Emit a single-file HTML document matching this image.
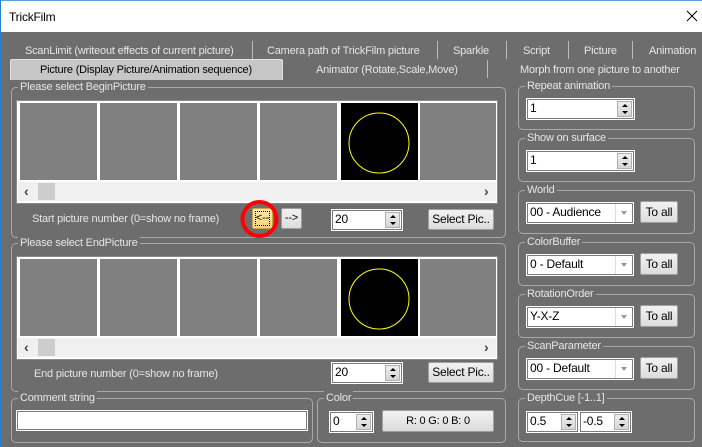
<!DOCTYPE html>
<html><head><meta charset="utf-8"><style>
*{box-sizing:border-box;margin:0;padding:0}
body{width:702px;height:447px;overflow:hidden;background:#6d6d6d;font-family:"Liberation Sans",sans-serif;font-size:11px;letter-spacing:-0.2px;color:#e6e6e6;position:relative}
.a{position:absolute}
.t{position:absolute;white-space:nowrap;line-height:14px}
.g{position:absolute;border:1px solid #a9a9a9;border-radius:5px}
.gl{position:absolute;top:-8px;left:6px;background:#6d6d6d;padding:0 2px;line-height:14px;white-space:nowrap;color:#e6e6e6}
.sep{position:absolute;width:1px;background:#bcbcbc}
.btn{position:absolute;background:linear-gradient(#f2f2f2,#dcdcdc);border:1px solid #a0a0a0;border-radius:2px;color:#000;text-align:center;line-height:18px}
.tb{position:absolute;background:#fff;border:1px solid #7a7a7a;outline:1px solid #fff;color:#000;line-height:17px;padding-left:2px;font-size:12px}
.sp{position:absolute;right:1px;top:1px;bottom:1px;width:15px;background:linear-gradient(#eee,#d6d6d6);border:1px solid #b0b0b0}
.sp:before{content:"";position:absolute;left:4px;top:2px;border:3px solid transparent;border-bottom:3px solid #000;border-top:0}
.sp:after{content:"";position:absolute;left:4px;bottom:2px;border:3px solid transparent;border-top:3px solid #000;border-bottom:0}
.dd{position:absolute;right:0;top:0;bottom:0;width:17px;border-left:1px solid #ddd;background:#fff}
.dd:after{content:"";position:absolute;left:5px;top:7px;border:3px solid transparent;border-top:4px solid #999;border-bottom:0}
.strip{position:absolute;left:16px;width:482px;height:104px;background:#fff;border:1px solid #8a8a8a}
.cell{position:absolute;top:2px;width:77px;height:77px;background:#808080}
.scr{position:absolute;left:1px;right:1px;top:81px;height:19px;background:#f0f0f0}
.ar{position:absolute;top:1px;color:#444;font-weight:bold;font-size:14px;line-height:16px}
</style></head><body>
<div class="a" style="left:0;top:0;width:702px;height:32px;background:#fff"></div>
<div class="a" style="left:0;top:0;width:702px;height:1px;background:#5aa0dc"></div>
<div class="a" style="left:0;top:0;width:1px;height:447px;background:#2b7fd0"></div>
<div class="t" style="left:9px;top:10px;color:#000;font-size:12px">TrickFilm</div>
<svg class="a" style="left:686px;top:10px" width="12" height="12"><path d="M1 1L11 11M11 1L1 11" stroke="#000" stroke-width="1"/></svg>

<div class="t" style="left:25px;top:44px">ScanLimit (writeout effects of current picture)</div>
<div class="sep" style="left:252px;top:41px;height:18px"></div>
<div class="t" style="left:267px;top:44px">Camera path of TrickFilm picture</div>
<div class="sep" style="left:437px;top:41px;height:18px"></div>
<div class="t" style="left:453px;top:44px">Sparkle</div>
<div class="sep" style="left:506px;top:41px;height:18px"></div>
<div class="t" style="left:523px;top:44px">Script</div>
<div class="sep" style="left:568px;top:41px;height:18px"></div>
<div class="t" style="left:584px;top:44px">Picture</div>
<div class="sep" style="left:632px;top:41px;height:18px"></div>
<div class="t" style="left:649px;top:44px">Animation</div>
<div class="a" style="left:10px;top:59px;width:273px;height:21px;background:#c6c6c6;border:1px solid #e0e0e0;border-bottom:0;border-radius:2px 2px 0 0"></div>
<div class="t" style="left:40px;top:63px;color:#000">Picture (Display Picture/Animation sequence)</div>
<div class="t" style="left:316px;top:63px">Animator (Rotate,Scale,Move)</div>
<div class="sep" style="left:487px;top:60px;height:18px"></div>
<div class="t" style="left:520px;top:63px">Morph from one picture to another</div>

<div class="g" style="left:11px;top:87px;width:495px;height:151px"><div class="gl">Please select BeginPicture</div></div>
<div class="strip" style="top:100px">
 <div class="cell" style="left:3px"></div><div class="cell" style="left:83px"></div><div class="cell" style="left:163px"></div><div class="cell" style="left:243px"></div>
 <div class="cell" style="left:324px;background:#000"><svg width="77" height="77"><circle cx="38" cy="40" r="30" fill="none" stroke="#ffff00" stroke-width="1"/></svg></div>
 <div class="cell" style="left:403px;width:76px"></div>
 <div class="scr"><span class="ar" style="left:6px">‹</span><div class="a" style="left:20px;top:1px;width:17px;height:17px;background:#cdcdcd"></div><span class="ar" style="left:466px">›</span></div>
</div>
<div class="t" style="left:32px;top:212px">Start picture number (0=show no frame)</div>
<div class="btn" style="left:252px;top:208px;width:21px;height:21px;background:linear-gradient(#ffe9a8,#f7d47a);border-color:#c9a64a"><div class="a" style="left:2px;top:2px;right:2px;bottom:2px;border:1px dotted #000"></div>&lt;--</div>
<svg class="a" style="left:238px;top:197px" width="44" height="44"><circle cx="21.5" cy="22" r="17" fill="none" stroke="#ff0000" stroke-width="4"/></svg>
<div class="btn" style="left:281px;top:208px;width:21px;height:21px">--&gt;</div>
<div class="tb" style="left:332px;top:210px;width:70px;height:20px">20<div class="sp"></div></div>
<div class="btn" style="left:428px;top:209px;width:66px;height:21px;font-size:12px">Select Pic..</div>

<div class="g" style="left:11px;top:243px;width:495px;height:149px"><div class="gl">Please select EndPicture</div></div>
<div class="strip" style="top:256px">
 <div class="cell" style="left:3px"></div><div class="cell" style="left:83px"></div><div class="cell" style="left:163px"></div><div class="cell" style="left:243px"></div>
 <div class="cell" style="left:324px;background:#000"><svg width="77" height="77"><circle cx="38" cy="40" r="30" fill="none" stroke="#ffff00" stroke-width="1"/></svg></div>
 <div class="cell" style="left:403px;width:76px"></div>
 <div class="scr"><span class="ar" style="left:6px">‹</span><div class="a" style="left:20px;top:1px;width:17px;height:17px;background:#cdcdcd"></div><span class="ar" style="left:466px">›</span></div>
</div>
<div class="t" style="left:34px;top:367px">End picture number (0=show no frame)</div>
<div class="tb" style="left:332px;top:363px;width:70px;height:20px">20<div class="sp"></div></div>
<div class="btn" style="left:428px;top:362px;width:66px;height:21px;font-size:12px">Select Pic..</div>

<div class="g" style="left:11px;top:398px;width:302px;height:45px"><div class="gl">Comment string</div></div>
<div class="tb" style="left:17px;top:411px;width:290px;height:19px"></div>
<div class="g" style="left:317px;top:398px;width:189px;height:45px"><div class="gl">Color</div></div>
<div class="tb" style="left:330px;top:412px;width:43px;height:20px">0<div class="sp"></div></div>
<div class="btn" style="left:382px;top:410px;width:112px;height:22px;line-height:20px">R: 0 G: 0 B: 0</div>

<div class="g" style="left:518px;top:86px;width:177px;height:44px"><div class="gl">Repeat animation</div></div>
<div class="tb" style="left:527px;top:99px;width:107px;height:20px">1<div class="sp"></div></div>
<div class="g" style="left:518px;top:138px;width:177px;height:44px"><div class="gl">Show on surface</div></div>
<div class="tb" style="left:527px;top:151px;width:107px;height:20px">1<div class="sp"></div></div>

<div class="g" style="left:518px;top:190px;width:177px;height:44px"><div class="gl">World</div></div>
<div class="tb" style="left:527px;top:203px;width:106px;height:20px">00 - Audience<div class="dd"></div></div>
<div class="btn" style="left:640px;top:201px;width:38px;height:22px;line-height:20px;font-size:12px">To all</div>

<div class="g" style="left:518px;top:242px;width:177px;height:44px"><div class="gl">ColorBuffer</div></div>
<div class="tb" style="left:527px;top:255px;width:106px;height:20px">0 - Default<div class="dd"></div></div>
<div class="btn" style="left:640px;top:253px;width:38px;height:22px;line-height:20px;font-size:12px">To all</div>

<div class="g" style="left:518px;top:294px;width:177px;height:44px"><div class="gl">RotationOrder</div></div>
<div class="tb" style="left:527px;top:307px;width:106px;height:20px">Y-X-Z<div class="dd"></div></div>
<div class="btn" style="left:640px;top:305px;width:38px;height:22px;line-height:20px;font-size:12px">To all</div>

<div class="g" style="left:518px;top:346px;width:177px;height:44px"><div class="gl">ScanParameter</div></div>
<div class="tb" style="left:527px;top:359px;width:106px;height:20px">00 - Default<div class="dd"></div></div>
<div class="btn" style="left:640px;top:357px;width:38px;height:22px;line-height:20px;font-size:12px">To all</div>

<div class="g" style="left:518px;top:398px;width:177px;height:44px"><div class="gl">DepthCue [-1..1]</div></div>
<div class="tb" style="left:527px;top:412px;width:51px;height:20px">0.5<div class="sp"></div></div>
<div class="tb" style="left:580px;top:412px;width:51px;height:20px">-0.5<div class="sp"></div></div>
</body></html>
